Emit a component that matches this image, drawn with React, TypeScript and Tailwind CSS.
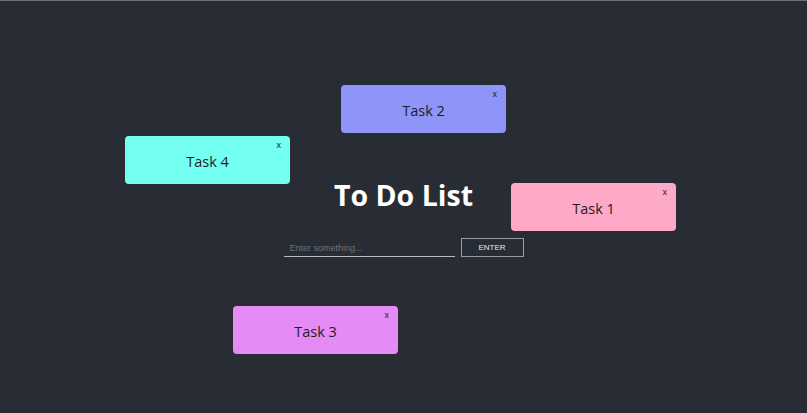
import { useState } from "react";

// Sticky-ish task cards scattered around the board
const initialTasks = [
  { id: 1, text: "Task 1", color: "bg-[#ffa9c9]", pos: "left-[511px] top-[182px]" },
  { id: 2, text: "Task 2", color: "bg-[#8f94f9]", pos: "left-[341px] top-[84px]" },
  { id: 3, text: "Task 3", color: "bg-[#e68bf5]", pos: "left-[233px] top-[305px]" },
  { id: 4, text: "Task 4", color: "bg-[#73fff1]", pos: "left-[125px] top-[135px]" },
];

export default function App() {
  const [tasks, setTasks] = useState(initialTasks);
  const [value, setValue] = useState("");

  return (
    <div className="relative w-full h-[413px] overflow-hidden bg-[#282c34] border-t border-[#6b6e73] font-['Open_Sans','Noto_Sans',sans-serif]">
      <div className="flex flex-col items-center pt-[172px]">
        <h1 className="text-[28.5px] leading-[44px] font-bold text-white">To Do List</h1>
        <div className="flex items-end gap-[6px] mt-[21px]">
          <input
            value={value}
            onChange={(e) => setValue(e.target.value)}
            placeholder="Enter something..."
            className="w-[171px] h-[18px] px-[6px] bg-transparent border-b border-[#b9bbbe] text-[9px] text-white placeholder:text-[#6f737a] outline-none font-['Liberation_Sans',sans-serif]"
          />
          <button className="w-[63px] h-[19px] border border-[#9a9ca0] text-[8px] font-normal text-[#e8e8e8] font-['Liberation_Sans',sans-serif]">
            ENTER
          </button>
        </div>
      </div>

      {tasks.map((t) => (
        <div
          key={t.id}
          className={`absolute w-[165px] h-[48px] rounded-[4px] flex items-center justify-center pt-[3px] ${t.color} ${t.pos}`}
        >
          <span className="text-[14.5px] text-[#1c1c24]">{t.text}</span>
          <button
            onClick={() => setTasks(tasks.filter((x) => x.id !== t.id))}
            className="absolute top-[3px] right-[9px] text-[9px] leading-[12px] text-[#1c1c24] font-['Liberation_Sans',sans-serif]"
          >
            x
          </button>
        </div>
      ))}
    </div>
  );
}
